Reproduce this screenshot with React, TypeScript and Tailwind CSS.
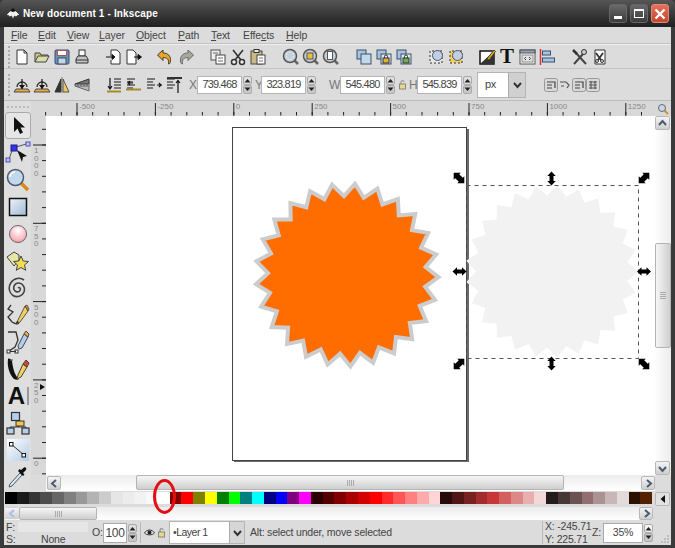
import type { ReactNode } from "react";

const sans = "font-['Liberation_Sans',Arial,sans-serif]";

const menus = [
  { pre: "", key: "F", post: "ile", w: "w-[27px]" },
  { pre: "", key: "E", post: "dit", w: "w-[29px]" },
  { pre: "", key: "V", post: "iew", w: "w-[32px]" },
  { pre: "", key: "L", post: "ayer", w: "w-[37px]" },
  { pre: "", key: "O", post: "bject", w: "w-[42px]" },
  { pre: "", key: "P", post: "ath", w: "w-[33px]" },
  { pre: "", key: "T", post: "ext", w: "w-[32px]" },
  { pre: "Effe", key: "c", post: "ts", w: "w-[43px]" },
  { pre: "", key: "H", post: "elp", w: "w-[30px]" },
];

const swatches = [
  "#000000", "#1a1a1a", "#333333", "#4d4d4d", "#666666", "#808080", "#999999", "#b3b3b3", "#cccccc", "#e6e6e6", "#ececec", "#f2f2f2", "#f9f9f9", "#ffffff",
  "#800000", "#ff0000", "#808000", "#ffff00", "#008000", "#00ff00", "#008080", "#00ffff", "#000080", "#0000ff", "#800080", "#ff00ff",
  "#2b0000", "#550000", "#800000", "#aa0000", "#d40000", "#ff0000", "#ff2a2a", "#ff5555", "#ff8080", "#ffaaaa", "#ffd5d5",
  "#280b0b", "#501616", "#782121", "#a02c2c", "#c83737", "#d35f5f", "#de8787", "#e9afaf", "#f4d7d7",
  "#241c1c", "#483737", "#6c5353", "#916f6f", "#ac9393", "#c8b7b7", "#e3dbdb",
  "#2b1100", "#552200",
];

function starPoints(cx: number, cy: number, outer: number, inner: number, startDeg: number) {
  const pts: string[] = [];
  for (let i = 0; i < 50; i++) {
    const r = i % 2 === 0 ? outer : inner;
    const a = ((startDeg + i * 7.2) * Math.PI) / 180;
    pts.push(`${(cx + r * Math.cos(a)).toFixed(1)},${(cy + r * Math.sin(a)).toFixed(1)}`);
  }
  return pts.join(" ");
}

function Ic({ children, size = 18 }: { children: ReactNode; size?: number }) {
  return (
    <svg width={size} height={size} viewBox="0 0 18 18" fill="none" stroke="#333" strokeWidth="1">
      {children}
    </svg>
  );
}

function Slot({ children }: { children: ReactNode }) {
  return <div className="w-[20px] flex items-center justify-center shrink-0">{children}</div>;
}

function Handle() {
  return <div className="ml-[4px] w-[2px] h-[22px] shrink-0 border-l-2 border-dotted border-[#aaaaaa]" />;
}

function Spinner({ glow = false }: { glow?: boolean }) {
  return (
    <div className="w-[9px] h-[18px] ml-[1px] flex flex-col justify-between shrink-0">
      <div className={`h-[9px] flex items-center justify-center rounded-[2px] border border-[#aaaaaa] ${glow ? "bg-[#f4f4f4]" : "bg-[#dddddd]"}`}>
        <svg width="7" height="5" viewBox="0 0 7 5"><path d="M0.5 4.5 3.5 1 6.5 4.5Z" fill="#222" /></svg>
      </div>
      <div className="h-[9px] flex items-center justify-center rounded-[2px] border border-[#aaaaaa] bg-[#c8c8c8]">
        <svg width="7" height="5" viewBox="0 0 7 5"><path d="M0.5 0.5 3.5 4 6.5 0.5Z" fill="#222" /></svg>
      </div>
    </div>
  );
}

function NumField({ value }: { value: string }) {
  return (
    <div className="flex items-center shrink-0">
      <div className="w-[45px] h-[18px] bg-white border border-[#b4b4b4] flex items-center justify-center text-[11px] tracking-[-0.8px] text-[#444]">
        {value}
      </div>
      <Spinner />
    </div>
  );
}

function Chevron({ dir, color = "#4a5a70" }: { dir: "left" | "right" | "up" | "down"; color?: string }) {
  const d = {
    left: "M7 2 3 5.5 7 9",
    right: "M4 2 8 5.5 4 9",
    up: "M2 7 5.5 3 9 7",
    down: "M2 4 5.5 8 9 4",
  }[dir];
  return (
    <svg width="11" height="11" viewBox="0 0 11 11" fill="none" stroke={color} strokeWidth="2">
      <path d={d} />
    </svg>
  );
}

function ArrowBtn({ dir, className = "", color }: { dir: "left" | "right" | "up" | "down"; className?: string; color?: string }) {
  return (
    <div className={`flex items-center justify-center rounded-[2px] border border-[#b8b8b8] bg-gradient-to-b from-[#f4f4f4] to-[#cfcfcf] shrink-0 ${className}`}>
      <Chevron dir={dir} color={color} />
    </div>
  );
}

function Grip({ vertical = false }: { vertical?: boolean }) {
  return (
    <div className={`flex ${vertical ? "flex-col gap-[1px]" : "gap-[1px]"}`}>
      {[0, 1, 2, 3].map((i) => (
        <div key={i} className={vertical ? "w-[6px] h-[1px] bg-[#aaaaaa]" : "w-[1px] h-[6px] bg-[#aaaaaa]"} />
      ))}
    </div>
  );
}

/* main toolbar icons */
const IconNew = () => (
  <Ic><path d="M4 2h7l3 3v11H4z" fill="#fff" /><path d="M11 2v3h3" /></Ic>
);
const IconOpen = () => (
  <Ic><path d="M2 14V5h5l1 2h7v2" fill="#c9c98e" stroke="#444" /><path d="M2 14l3-6h11l-3 6z" fill="#dcdca8" stroke="#444" /></Ic>
);
const IconSave = () => (
  <Ic><rect x="2" y="2" width="14" height="14" rx="1" fill="#6d8fb4" stroke="#34506e" /><rect x="4.5" y="2.5" width="9" height="5" fill="#fff" stroke="#a55" /><rect x="5" y="10" width="8" height="6" fill="#c8d4e0" stroke="#34506e" /></Ic>
);
const IconPrint = () => (
  <Ic><rect x="6" y="2" width="6" height="6" fill="#fff" /><path d="M3 15v-4l2-3h8l2 3v4z" fill="#c4c4c4" /><path d="M3 12h12" /></Ic>
);
const IconImport = () => (
  <Ic><path d="M6 2h6l3 3v11H6v-4M6 8V2" fill="#fff" /><path d="M1 9h8M7 6.5 10 9l-3 2.5z" fill="#111" stroke="#111" /></Ic>
);
const IconExport = () => (
  <Ic><path d="M2 2h6l3 3v11H2z" fill="#fff" /><path d="M9 9h6M13 6.5 16.5 9 13 11.5z" fill="#111" stroke="#111" /></Ic>
);
const IconUndo = () => (
  <Ic><path d="M1.5 7 7 2v3c5 0 8 3 7.5 8.5-.2 2-1.5 2.5-2 2.5 1-5-2-6.5-5.5-6.5v3z" fill="#e8a52c" stroke="#4a3a20" /></Ic>
);
const IconRedo = () => (
  <Ic><path d="M16.5 7 11 2v3c-5 0-8 3-7.5 8.5.2 2 1.5 2.5 2 2.5-1-5 2-6.5 5.5-6.5v3z" fill="#a8a89c" stroke="#666" /></Ic>
);
const IconDup = () => (
  <Ic><rect x="2" y="2" width="9" height="10" fill="#eeeeee" stroke="#555" /><rect x="7" y="7" width="9" height="9" fill="#fff" stroke="#444" /><path d="M4 5h5M9 10h5M9 13h5" stroke="#666" /></Ic>
);
const IconCut = () => (
  <Ic><path d="M4 2 12 12M14 2 6 12" strokeWidth="1.6" /><circle cx="5" cy="14" r="2.5" fill="#eee" strokeWidth="1.5" /><circle cx="13" cy="14" r="2.5" fill="#eee" strokeWidth="1.5" /></Ic>
);
const IconPaste = () => (
  <Ic><rect x="2" y="3" width="11" height="13" fill="#c9b88a" stroke="#54482c" /><rect x="5" y="1.5" width="5" height="3" fill="#eee" /><rect x="8" y="7" width="8" height="9" fill="#fff" stroke="#444" /><path d="M10 10h4M10 13h4" stroke="#777" /></Ic>
);
function IconZoom({ inner }: { inner: ReactNode }) {
  return (
    <Ic>
      <path d="M12.5 12.5 16 16" stroke="#666" strokeWidth="2.5" />
      <circle cx="8" cy="8" r="6.5" fill="#c4d0dc" stroke="#555" strokeWidth="1.5" />
      {inner}
    </Ic>
  );
}
const IconGroup = ({ badge }: { badge: "none" | "gold" | "green" }) => (
  <Ic>
    <rect x="2" y="2" width="9" height="9" fill="#aac4de" stroke="#34506e" />
    <rect x="6" y="6" width="10" height="10" fill={badge === "none" ? "#c5d8ea" : "#dfe8ef"} stroke="#34506e" />
    {badge !== "none" && (
      <>
        <rect x="8" y="10" width="6" height="5" fill={badge === "gold" ? "#e0b030" : "#6cb04a"} stroke="#333" />
        <path d="M9.5 10V8.5a1.5 1.5 0 0 1 3 0V10" />
      </>
    )}
  </Ic>
);
const IconZoomBox = ({ gold }: { gold?: boolean }) => (
  <Ic>
    <path d="M3 3v12h12V3z" stroke="#333" strokeDasharray="2 2" fill={gold ? "#f0d060" : "#e8e8e8"} />
    <circle cx="10.5" cy="7.5" r="5" fill="#bdd0e4" stroke="#556" />
  </Ic>
);
const IconFill = () => (
  <Ic>
    <path d="M2 3h14v13H2z" fill="#fff" stroke="#111" strokeWidth="1.5" />
    <path d="M2 16 16 3v13z" fill="#333" stroke="none" />
    <path d="M9 11 16 2l1.5 1.5L11 12z" fill="#e8b020" stroke="#443" />
  </Ic>
);
const IconXml = () => (
  <Ic>
    <rect x="2" y="2" width="15" height="14" fill="#fff" stroke="#555" />
    <rect x="2" y="2" width="15" height="3" fill="#8da3bd" stroke="#555" />
    <rect x="4" y="7" width="11" height="7" fill="#e4e4e4" stroke="#888" />
    <path d="M8 9 6.5 10.5 8 12M11 9l1.5 1.5L11 12" />
  </Ic>
);
const IconAlign = () => (
  <Ic>
    <path d="M2.5 1v16" stroke="#e03030" strokeWidth="1.5" />
    <rect x="4.5" y="3" width="8" height="4" fill="#a9c4e0" stroke="#34506e" />
    <rect x="4.5" y="10" width="12" height="4" fill="#a9c4e0" stroke="#34506e" />
  </Ic>
);
const IconPrefs = () => (
  <Ic>
    <path d="M3 16 12 6M15 16 5 5" stroke="#444" strokeWidth="2" />
    <circle cx="13" cy="4" r="2.5" fill="#ccc" stroke="#333" />
    <path d="M2 2l4 4" stroke="#333" strokeWidth="2.5" />
  </Ic>
);
const IconDocPrefs = () => (
  <Ic>
    <path d="M4 2h10v14H4z" fill="#fff" stroke="#333" />
    <path d="M5 5 10 12M12 5 7 12" stroke="#333" strokeWidth="1.8" />
    <circle cx="6" cy="13" r="1.5" fill="#ddd" />
    <circle cx="11" cy="13" r="1.5" fill="#ddd" />
  </Ic>
);

/* commands bar icons */
const IconRotate = ({ flip }: { flip?: boolean }) => (
  <Ic>
    <g transform={flip ? "translate(18 0) scale(-1 1)" : undefined}>
      <path d="M1 16l2-3h12l2 3z" fill="#e0b040" stroke="#544" />
      <path d="M4 11a5 5 0 0 1 10 0" strokeWidth="1.3" />
      <path d="M9 3v10" stroke="#111" strokeWidth="1.2" />
      <path d="M6 9l3 4 3-4z" fill="#111" stroke="none" />
    </g>
  </Ic>
);
const IconFlipH = () => (
  <Ic>
    <path d="M8 3 2 16h6z" fill="#333" />
    <path d="M10 3l6 13h-6z" fill="#e8c860" stroke="#555" />
    <path d="M9 1v16" stroke="#777" strokeDasharray="2 1" />
  </Ic>
);
const IconFlipV = () => (
  <Ic>
    <path d="M16 3 2 8h14z" fill="#777" />
    <path d="M16 15 2 10h14z" fill="#bbb" stroke="#666" />
    <path d="M1 9h16" stroke="#555" strokeDasharray="2 1" />
  </Ic>
);
function IconLevels({ bar, mode }: { bar: "bottom" | "mid" | "top" | "plain"; mode: number }) {
  const ys = [3, 6, 9, 12];
  return (
    <Ic>
      {ys.map((y, i) => (
        <path key={y} d={`M${mode === 0 ? 9 : 2} ${y}h${mode === 0 ? 7 : 8 - (i % 2) * 2}`} stroke="#444" strokeWidth="1.3" />
      ))}
      {bar === "bottom" && <path d="M2 15.5h14" stroke="#a88a2a" strokeWidth="2" />}
      {bar === "mid" && <path d="M1 13.5h15" stroke="#a88a2a" strokeWidth="2" />}
      {bar === "top" && <path d="M2 2h15" stroke="#333" strokeWidth="2" />}
      <path d={mode === 0 ? "M5 2v11M3 10l2 3 2-3" : mode === 1 ? "M4 7h4M5 5 3 7l2 2" : mode === 2 ? "M12 9h5M14 7l2 2-2 2" : "M13 5v12M11 7l2-2.5L15 7"} stroke="#111" strokeWidth="1.2" />
    </Ic>
  );
}
const IconMini = ({ variant }: { variant: number }) => (
  <svg width="14" height="14" viewBox="0 0 14 14" fill="none" stroke="#555">
    {variant !== 1 && <rect x="0.5" y="0.5" width="13" height="13" rx="2" fill="#d8d8d8" stroke="#999" />}
    {variant === 1 ? (
      <path d="M2 4h6l3 3-2 3M3 8h3" strokeWidth="1.2" />
    ) : variant === 3 ? (
      <path d="M3 4h8M3 7h8M3 10h8M5 3v8M9 3v8" strokeWidth="1.1" />
    ) : (
      <path d="M3 4h8v6M3 7h5M3 10h5" strokeWidth="1.2" stroke="#444" />
    )}
  </svg>
);

/* toolbox icons */
const tools: ReactNode[] = [
  <svg key="sel" width="18" height="20" viewBox="0 0 18 20"><path d="M5 1v15l3.5-3.5L11 18l3-1.5-2.5-5H16z" fill="#111" /></svg>,
  <svg key="node" width="26" height="24" viewBox="0 0 26 24" fill="none">
    <path d="M8 7 4 18M8 7 21 3" stroke="#555" />
    <rect x="6" y="4" width="6" height="6" fill="#3434e8" stroke="#1a1a90" />
    <rect x="1" y="17" width="4" height="4" fill="#c4c8f0" stroke="#4a4ac0" />
    <rect x="21" y="1" width="4" height="4" fill="#c4c8f0" stroke="#4a4ac0" />
    <path d="M12 9 22 15l-4 1-1 5z" fill="#111" />
  </svg>,
  <svg key="zoom" width="24" height="24" viewBox="0 0 24 24" fill="none">
    <path d="M15 15 22 22" stroke="#d88a18" strokeWidth="3.5" />
    <circle cx="9.5" cy="9.5" r="8" fill="#c4d8ec" stroke="#4a5a70" strokeWidth="1.5" />
    <path d="M4 9a5.5 5.5 0 0 1 5-5" stroke="#fff" strokeWidth="1.5" />
  </svg>,
  <svg key="rect" width="20" height="20" viewBox="0 0 20 20">
    <defs><linearGradient id="rg" x1="0" y1="0" x2="1" y2="1"><stop offset="0" stopColor="#eef3f8" /><stop offset="1" stopColor="#9dbad6" /></linearGradient></defs>
    <rect x="1.5" y="1.5" width="17" height="17" fill="url(#rg)" stroke="#111" strokeWidth="1.5" />
  </svg>,
  <svg key="circle" width="20" height="20" viewBox="0 0 20 20">
    <defs><radialGradient id="cg" cx="0.5" cy="0.3" r="0.8"><stop offset="0" stopColor="#fff" /><stop offset="1" stopColor="#f8909e" /></radialGradient></defs>
    <circle cx="10" cy="10" r="8.5" fill="url(#cg)" stroke="#666" />
  </svg>,
  <svg key="star" width="24" height="22" viewBox="0 0 24 22" stroke="#444">
    <path d="M1 7 8 2l5 3v5l-5 6z" fill="#e6e6a8" />
    <path d="M15 6l2.2 5 5.3.5-4 3.5 1.2 5.3L15 17.5 10.3 20.3l1.2-5.3-4-3.5 5.3-.5z" fill="#f2dc50" />
  </svg>,
  <svg key="spiral" width="22" height="22" viewBox="0 0 22 22" fill="none" stroke="#444" strokeWidth="1.6">
    <path d="M11 11c1.5-1.5 3 .5 2 2.5s-5 2-6-1 1-7 5-6.5 6.5 5 5 9-7 6-11 3.5S1 10 4 5.5 13 0 17 3" />
  </svg>,
  <svg key="pencil" width="24" height="24" viewBox="0 0 24 24" fill="none">
    <path d="M5 2 2 6l5 3-5 5 4 5c3 2 6 2 7 1" stroke="#333" strokeWidth="1.3" />
    <path d="M12 17 10 21l4-2L22 8l-3-5z" fill="#f2d060" stroke="#554" />
    <path d="M19 3l3 5 1-2-2-4z" fill="#e8883c" stroke="#554" />
    <path d="M10 21l1-3 2 1z" fill="#222" />
  </svg>,
  <svg key="pen" width="24" height="24" viewBox="0 0 24 24" fill="none">
    <path d="M2 2h8l2 8-3 7-6 4" stroke="#333" strokeWidth="1.3" />
    <rect x="1" y="20" width="3" height="3" fill="#fff" stroke="#333" />
    <rect x="9" y="20" width="3" height="3" fill="#fff" stroke="#333" />
    <path d="M4 21.5h6" stroke="#333" />
    <path d="M12 16l1 3 3-1 6-11-4-3z" fill="#b4cfe8" stroke="#445" />
    <path d="M18 4l4 3 1-3-3-3z" fill="#f0b030" stroke="#445" />
  </svg>,
  <svg key="callig" width="24" height="24" viewBox="0 0 24 24" fill="none">
    <path d="M2 2c-1 7 1 15 6 20 2 1 4 1 5 0-4-3-6-10-7-18-1-2-3-3-4-2z" fill="#111" />
    <path d="M12 18l-1 4 4-2 6-10-4-3z" fill="#f0d060" stroke="#443" />
    <path d="M17 7l4 3 2-4-3-3z" fill="#d84040" stroke="#443" />
    <path d="M4 3h3" stroke="#555" />
  </svg>,
  <div key="text" className="relative w-[22px] h-[24px] flex items-center justify-center">
    <span className="font-['Liberation_Sans',Arial,sans-serif] font-bold text-[24px] leading-none text-[#111] mr-[2px]">A</span>
    <span className="absolute right-[0px] top-[3px] h-[18px] w-[2px] border-x border-[#999]" />
  </div>,
  <svg key="diagram" width="24" height="24" viewBox="0 0 24 24" fill="none">
    <path d="M4 22v-6h16v6M12 11v5" stroke="#333" />
    <rect x="5.5" y="1.5" width="8" height="8" fill="#b4cfe8" stroke="#333" strokeWidth="1.2" />
    <rect x="10" y="10" width="8" height="5" fill="#f0c850" stroke="#333" />
    <rect x="1" y="17" width="7" height="6" fill="#b4cfe8" stroke="#333" strokeWidth="1.2" />
    <rect x="16" y="17" width="7" height="6" fill="#b4cfe8" stroke="#333" strokeWidth="1.2" />
  </svg>,
  <svg key="gradient" width="22" height="22" viewBox="0 0 22 22">
    <defs><linearGradient id="gg" x1="0" y1="0" x2="1" y2="1"><stop offset="0" stopColor="#ffffff" /><stop offset="1" stopColor="#b4cce4" /></linearGradient></defs>
    <rect x="0" y="0" width="22" height="22" fill="url(#gg)" />
    <path d="M4 5 17 16" stroke="#333" />
    <rect x="2.5" y="3.5" width="3.5" height="3.5" fill="#fff" stroke="#111" />
    <rect x="15" y="14.5" width="3.5" height="3.5" fill="#fff" stroke="#111" />
  </svg>,
  <svg key="dropper" width="22" height="24" viewBox="0 0 22 24" fill="none">
    <path d="M13 8 3 19l-1 3 3-1L15 10z" fill="#dbe6f0" stroke="#556" />
    <path d="M11 6l5 5 1.5-1.5L16 8l3-3c1-1.5-.5-3.5-2-2.5L14 5l-1.5-1z" fill="#111" />
  </svg>,
];

function Ruler() {
  const labels = ["-500", "-250", "0", "250", "500", "750", "1000", "1250"];
  const major = labels.map((_, i) => 77 + i * 78.4);
  const minor: number[] = [];
  for (let x = 77 - 78.4; x < 654; x += 15.68) minor.push(x);
  return (
    <svg width="623" height="15" viewBox="31 101 623 15" className="shrink-0">
      {minor.map((x, i) => (
        <path key={i} d={`M${x.toFixed(1)} 112V115.5`} stroke="#222" />
      ))}
      {major.map((x, i) => (
        <g key={x}>
          <path d={`M${x.toFixed(1)} 103V115.5`} stroke="#222" />
          <text x={x + 2} y="109" fontSize="8" fontFamily="'Liberation Sans',Arial,sans-serif" fill="#888">{labels[i]}</text>
        </g>
      ))}
    </svg>
  );
}

function VRuler() {
  const labels = ["1000", "750", "500", "250", "0"];
  const major = labels.map((_, i) => 145 + i * 78.3);
  const minor: number[] = [];
  for (let y = 129.3; y < 475; y += 15.66) minor.push(y);
  return (
    <svg width="15" height="359" viewBox="31 116 15 359" className="shrink-0">
      {minor.map((y, i) => (
        <path key={i} d={`M42 ${y.toFixed(1)}H46`} stroke="#222" />
      ))}
      {major.map((y, i) => (
        <g key={y}>
          <path d={`M33 ${y.toFixed(1)}H46`} stroke="#222" />
          {labels[i].split("").map((c, j) => (
            <text key={j} x="34" y={y + 8 + j * 7.5} fontSize="8" fontFamily="'Liberation Sans',Arial,sans-serif" fill="#888">{c}</text>
          ))}
        </g>
      ))}
      <path d="M40 384 45 387 40 390z" fill="#111" />
    </svg>
  );
}

function HandleArrow({ x, y, rot }: { x: number; y: number; rot: number }) {
  const diag = rot === 45 || rot === 135;
  return (
    <polygon
      transform={`translate(${x} ${y}) rotate(${rot})`}
      points={
        diag
          ? "-7.5,0 -2.5,-5 -2.5,-2.8 2.5,-2.8 2.5,-5 7.5,0 2.5,5 2.5,2.8 -2.5,2.8 -2.5,5"
          : "-7,0 -2.5,-4.2 -2.5,-2 2.5,-2 2.5,-4.2 7,0 2.5,4.2 2.5,2 -2.5,2 -2.5,4.2"
      }
      fill="#000"
    />
  );
}

function Canvas() {
  return (
    <svg width="608" height="359" viewBox="46 116 608 359" className="shrink-0 bg-white">
      <path d="M234 461H468V129" fill="none" stroke="#6a6a6a" strokeWidth="2" />
      <rect x="232.5" y="127.5" width="234" height="333" fill="#fff" stroke="#444" />
      <polygon points={starPoints(347, 275, 91.5, 79, 1.4)} fill="#ff6c00" stroke="#cccccc" strokeWidth="4" strokeLinejoin="miter" />
      <polygon points={starPoints(552, 271.5, 86.5, 76, 0)} fill="#f2f2f2" />
      <rect x="466.5" y="185.5" width="172" height="173" fill="none" stroke="#555" strokeDasharray="4 4" />
      <HandleArrow x={459} y={178} rot={45} />
      <HandleArrow x={644} y={178} rot={135} />
      <HandleArrow x={459} y={364} rot={135} />
      <HandleArrow x={644} y={364} rot={45} />
      <HandleArrow x={551.5} y={178.5} rot={90} />
      <HandleArrow x={551.5} y={363.5} rot={90} />
      <HandleArrow x={459.5} y={271.5} rot={0} />
      <HandleArrow x={644} y={271.5} rot={0} />
    </svg>
  );
}

export default function App() {
  return (
    <div className={`relative w-[675px] h-[548px] overflow-hidden flex flex-col bg-[#3a3a3a] text-[#444] text-[10.5px] leading-none ${sans}`}>
      {/* title bar */}
      <div className="h-[27px] shrink-0 flex items-center rounded-t-[5px] bg-gradient-to-b from-[#565656] via-[#3a3a3a] to-[#202020]">
        <svg width="16" height="14" viewBox="0 0 16 14" className="ml-[5px]">
          <path d="M8 1 15 8l-2.5.5L11 10 9.5 9 8 12.5 6.5 9l-2 1-1-1.5L1 8z" fill="#eeeeee" stroke="#111" strokeWidth="0.6" />
          <path d="M8 1 11 4 8 5 5 4z" fill="#111" />
        </svg>
        <span className="ml-[2px] text-[10px] font-bold text-white tracking-[0.15px]">New document 1 - Inkscape</span>
        <div className="ml-auto mr-[6px] flex gap-[3px]">
          <div className="w-[18px] h-[19px] rounded-[3px] border border-[#666] bg-gradient-to-b from-[#6a6a6a] to-[#3c3c3c] flex items-end justify-center pb-[3px]">
            <div className="w-[8px] h-[3px] bg-white" />
          </div>
          <div className="w-[18px] h-[19px] rounded-[3px] border border-[#666] bg-gradient-to-b from-[#6a6a6a] to-[#3c3c3c] flex items-center justify-center">
            <div className="w-[10px] h-[9px] border border-t-2 border-white" />
          </div>
          <div className="w-[18px] h-[19px] rounded-[3px] border border-[#e08a78] bg-gradient-to-b from-[#e4705a] to-[#c8452e] flex items-center justify-center">
            <svg width="12" height="12" viewBox="0 0 12 12"><path d="M1.5 1.5 10.5 10.5M10.5 1.5 1.5 10.5" stroke="#fff" strokeWidth="2.4" /></svg>
          </div>
        </div>
      </div>

      <div className="flex-1 flex flex-col mx-[4px] mb-[3px] bg-[#dcdcdc] min-h-0">
        {/* menu */}
        <div className="h-[17px] shrink-0 flex items-center pl-[7px] border-b border-[#c4c4c4]">
          {menus.map((m) => (
            <span key={m.key} className={`${m.w} shrink-0 tracking-[-0.1px]`}>
              {m.pre}
              <span className="underline">{m.key}</span>
              {m.post}
            </span>
          ))}
        </div>

        {/* main toolbar */}
        <div className="h-[25px] shrink-0 flex items-center border-b border-[#c4c4c4] border-t border-t-[#eeeeee]">
          <Handle />
          <div className="ml-[2px] flex">
            <Slot><IconNew /></Slot><Slot><IconOpen /></Slot><Slot><IconSave /></Slot><Slot><IconPrint /></Slot>
          </div>
          <div className="ml-[12px] flex">
            <Slot><IconImport /></Slot><Slot><IconExport /></Slot>
          </div>
          <div className="ml-[11px] flex gap-[1px]">
            <Slot><IconUndo /></Slot><Slot><IconRedo /></Slot>
          </div>
          <div className="ml-[12px] flex">
            <Slot><IconDup /></Slot><Slot><IconCut /></Slot><Slot><IconPaste /></Slot>
          </div>
          <div className="ml-[13px] flex">
            <Slot><IconZoom inner={<circle cx="8" cy="8" r="3.5" stroke="#eee" strokeDasharray="2 1" />} /></Slot>
            <Slot><IconZoom inner={<rect x="5" y="5" width="6" height="6" fill="#e8c040" stroke="#555" />} /></Slot>
            <Slot><IconZoom inner={<rect x="5.5" y="3.5" width="5" height="8" fill="#fff" stroke="#555" />} /></Slot>
          </div>
          <div className="ml-[13px] flex">
            <Slot><IconGroup badge="none" /></Slot><Slot><IconGroup badge="gold" /></Slot><Slot><IconGroup badge="green" /></Slot>
          </div>
          <div className="ml-[12px] flex">
            <Slot><IconZoomBox /></Slot><Slot><IconZoomBox gold /></Slot>
          </div>
          <div className="ml-[11px] flex">
            <Slot><IconFill /></Slot>
            <Slot><span className="font-['Liberation_Serif',serif] font-bold text-[21px] text-[#111]">T</span></Slot>
            <Slot><IconXml /></Slot>
            <Slot><IconAlign /></Slot>
          </div>
          <div className="ml-[13px] flex">
            <Slot><IconPrefs /></Slot><Slot><IconDocPrefs /></Slot>
          </div>
        </div>

        {/* commands bar */}
        <div className="h-[32px] shrink-0 flex items-center border-b border-[#bcbcbc]">
          <Handle />
          <div className="ml-[2px] flex">
            <Slot><IconRotate /></Slot><Slot><IconRotate flip /></Slot><Slot><IconFlipH /></Slot><Slot><IconFlipV /></Slot>
          </div>
          <div className="ml-[12px] flex">
            <Slot><IconLevels bar="bottom" mode={0} /></Slot>
            <Slot><IconLevels bar="mid" mode={1} /></Slot>
            <Slot><IconLevels bar="plain" mode={2} /></Slot>
            <Slot><IconLevels bar="top" mode={3} /></Slot>
          </div>
          <span className="ml-[5px] w-[8px] text-[12px] text-[#777]">X</span>
          <NumField value="739.468" />
          <span className="ml-[3px] w-[6px] text-[12px] text-[#777]">Y</span>
          <NumField value="323.819" />
          <span className="ml-[13px] w-[11px] text-[12px] text-[#777]">W</span>
          <NumField value="545.480" />
          <svg width="9" height="11" viewBox="0 0 9 11" className="ml-[3px]" fill="none">
            <rect x="1.5" y="5" width="6" height="5" fill="#e8d890" stroke="#887" />
            <path d="M3 5V3a1.5 1.5 0 0 1 3 0" stroke="#888" />
          </svg>
          <span className="ml-[2px] w-[8px] text-[12px] text-[#777]">H</span>
          <NumField value="545.839" />
          <div className="ml-[5px] w-[49px] h-[26px] shrink-0 flex bg-white border border-[#b4b4b4]">
            <span className="flex-1 pl-[7px] flex items-center text-[11px] tracking-[-0.3px]">px</span>
            <div className="w-[17px] flex items-center justify-center bg-[#d0d0d0] border-l border-[#aaaaaa]">
              <Chevron dir="down" color="#333" />
            </div>
          </div>
          <div className="ml-[18px] flex gap-0 items-center">
            <div className="w-[14px]"><IconMini variant={0} /></div>
            <div className="w-[14px]"><IconMini variant={1} /></div>
            <div className="w-[14px]"><IconMini variant={2} /></div>
            <div className="w-[14px]"><IconMini variant={3} /></div>
          </div>
        </div>

        {/* workspace */}
        <div className="relative flex-1 min-h-0 flex">
          {/* toolbox */}
          <div className="w-[27px] shrink-0 flex flex-col items-center bg-[#dedede]">
            <div className="h-[11px] w-full shrink-0 flex items-center justify-center">
              <div className="w-[22px] border-t-2 border-dotted border-[#bbbbbb]" />
            </div>
            {tools.map((t, i) => (
              <div
                key={i}
                className={`h-[27px] w-[26px] shrink-0 flex items-center justify-center ${i === 0 ? "rounded-[3px] border border-[#aaaaaa] bg-[#e6e6e6]" : ""}`}
              >
                {t}
              </div>
            ))}
          </div>

          <div className="flex-1 min-w-0 flex flex-col">
            <div className="h-[15px] shrink-0 flex bg-[#d8d8d8]">
              <Ruler />
              <div className="flex-1 flex items-center justify-center">
                <svg width="12" height="12" viewBox="0 0 12 12" fill="none">
                  <path d="M7 7 11 11" stroke="#d09030" strokeWidth="2" />
                  <circle cx="5" cy="5" r="3.5" fill="#c8d8e8" stroke="#667" />
                </svg>
              </div>
            </div>
            <div className="h-[359px] shrink-0 flex">
              <div className="bg-[#d8d8d8] shrink-0"><VRuler /></div>
              <Canvas />
              <div className="flex-1 flex flex-col items-center bg-gradient-to-r from-[#ffffff] to-[#ececec]">
                <ArrowBtn dir="up" className="w-[15px] h-[14px]" />
                <div className="flex-1 w-full relative">
                  <div className="absolute left-[1px] right-[0px] top-[113px] h-[105px] flex items-center justify-center rounded-[2px] border border-[#b4b4b4] bg-gradient-to-r from-[#f6f6f6] to-[#cfcfcf]">
                    <Grip vertical />
                  </div>
                </div>
                <ArrowBtn dir="down" className="w-[15px] h-[14px]" />
              </div>
            </div>
            <div className="h-[16px] shrink-0 flex">
              <div className="w-[15px] shrink-0" />
              <div className="w-[609px] shrink-0 flex bg-gradient-to-b from-[#ececec] to-[#ffffff]">
                <ArrowBtn dir="left" className="w-[14px] h-[14px] mt-[1px] ml-[1px]" />
                <div className="ml-[75px] w-[428px] h-[15px] flex items-center justify-center rounded-[2px] border border-[#b4b4b4] bg-gradient-to-b from-[#f6f6f6] to-[#cfcfcf]">
                  <Grip />
                </div>
                <ArrowBtn dir="right" className="ml-auto w-[14px] h-[14px] mt-[1px]" />
              </div>
            </div>
          </div>
        </div>

        {/* palette */}
        <div className="h-[16px] shrink-0 flex items-start pt-[1px]">
          <div className="ml-[1px] w-[647px] h-[12px] shrink-0 flex">
            {swatches.map((c, i) => (
              <div key={i} className="flex-1" style={{ backgroundColor: c }} />
            ))}
          </div>
          <div className="ml-[3px] w-[15px] h-[14px] flex items-center justify-center rounded-[2px] border border-[#b8b8b8] bg-[#e2e2e2]">
            <svg width="6" height="8" viewBox="0 0 6 8"><path d="M5 0 0.5 4 5 8z" fill="#111" /></svg>
          </div>
        </div>

        {/* palette scroll */}
        <div className="h-[13px] shrink-0 flex">
          <div className="ml-[1px] w-[648px] flex bg-gradient-to-b from-[#ececec] to-[#ffffff]">
            <ArrowBtn dir="left" className="w-[14px] h-[13px] border-transparent" color="#a8c0e8" />
            <div className="w-[78px] h-[13px] flex items-center justify-center rounded-[2px] border border-[#b4b4b4] bg-gradient-to-b from-[#f6f6f6] to-[#cfcfcf]">
              <Grip />
            </div>
            <ArrowBtn dir="right" className="ml-auto w-[14px] h-[13px]" />
          </div>
        </div>

        {/* status bar */}
        <div className="h-[25px] shrink-0 flex items-stretch tracking-[-0.2px]">
          <div className="ml-[2px] w-[84px] shrink-0 relative">
            <span className="absolute left-0 top-[2px]">F:</span>
            <div className="absolute left-[12px] top-[2px] w-[70px] h-[10px] bg-[#e6e6e6]" />
            <span className="absolute left-0 top-[14px]">S:</span>
            <span className="absolute left-[35px] top-[14px]">None</span>
          </div>
          <div className="ml-[2px] flex items-center shrink-0">
            <span className="w-[11px]">O:</span>
            <div className="w-[24px] h-[20px] bg-white border border-[#aaaaaa] flex items-center justify-center text-[12px] tracking-[-0.4px]">100</div>
            <Spinner />
          </div>
          <div className="ml-[3px] w-[1px] my-[2px] bg-[#b8b8b8]" />
          <div className="ml-[2px] w-[12px] flex items-center justify-center">
            <svg width="11" height="8" viewBox="0 0 11 8">
              <path d="M0.5 4C3 0 8 0 10.5 4 8 6.5 3 6.5 0.5 4z" fill="#eee" stroke="#333" />
              <circle cx="5.5" cy="3.5" r="2" fill="#222" />
            </svg>
          </div>
          <div className="w-[13px] flex items-center justify-center">
            <svg width="9" height="11" viewBox="0 0 9 11" fill="none">
              <rect x="1.5" y="5" width="6" height="5" fill="#e8d890" stroke="#887" />
              <path d="M3 5V3a1.5 1.5 0 0 1 3 0" stroke="#777" />
            </svg>
          </div>
          <div className="ml-[1px] my-[1px] w-[76px] shrink-0 flex bg-white border border-[#b4b4b4]">
            <span className="flex-1 pl-[3px] flex items-center tracking-[-0.5px]">•Layer 1</span>
            <div className="w-[15px] flex items-center justify-center bg-[#d6d6d6] border-l border-[#aaaaaa]">
              <Chevron dir="down" color="#333" />
            </div>
          </div>
          <span className="ml-[5px] w-[292px] shrink-0 flex items-center whitespace-nowrap">Alt: select under, move selected</span>
          <div className="w-[1px] my-[1px] bg-[#b8b8b8]" />
          <div className="ml-[2px] w-[47px] shrink-0 flex flex-col justify-center gap-[2px] whitespace-nowrap">
            <span>X: -245.71</span>
            <span>Y: 225.71</span>
          </div>
          <div className="flex items-center shrink-0">
            <span className="w-[11px]">Z:</span>
            <div className="w-[40px] h-[20px] bg-white border border-[#aaaaaa] flex items-center justify-center">35%</div>
            <Spinner glow />
          </div>
          <div className="flex-1 flex items-end justify-end pr-[1px] pb-[1px]">
            <svg width="10" height="10" viewBox="0 0 10 10" fill="#bdbdbd">
              <rect x="7" y="1" width="2" height="2" /><rect x="4" y="4" width="2" height="2" /><rect x="7" y="4" width="2" height="2" />
              <rect x="1" y="7" width="2" height="2" /><rect x="4" y="7" width="2" height="2" /><rect x="7" y="7" width="2" height="2" />
            </svg>
          </div>
        </div>
      </div>

      {/* red ring marking the white swatch */}
      <div className="absolute left-[153px] top-[479px] w-[23px] h-[35px] rounded-[50%] border-[3px] border-[#e30f14]" />
    </div>
  );
}
